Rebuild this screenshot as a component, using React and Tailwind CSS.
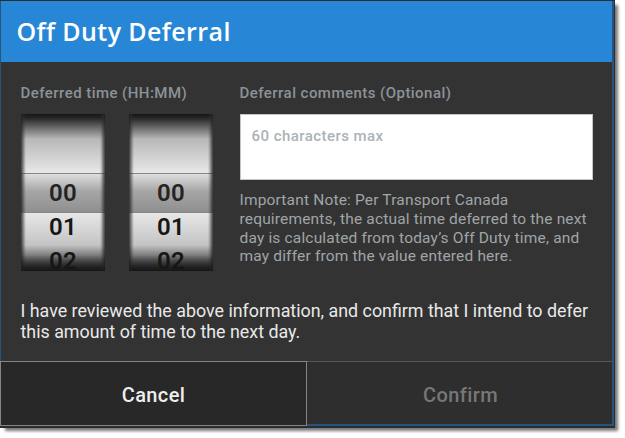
import React from 'react';

const WHEEL_VALUES = ['00', '01', '02'];

/**
 * WheelPicker Component
 * Metallic spinner with a shaded selection band
 */
function WheelPicker() {
    return (
        <div className="relative w-[84px] h-[157px] overflow-hidden bg-[linear-gradient(to_bottom,#161616_0px,#262626_4px,#6c6c6c_14px,#b8b8b8_25px,#e8e8e8_59px,#e8e8e8_98px,#c4c4c4_131px,#8c8c8c_139px,#161616_157px)]">
            <div className="absolute inset-x-0 top-[59px] h-[40px] border-y border-[#868686] bg-[linear-gradient(to_bottom,#dedede_0%,#a6a6a6_45%,#8f8f8f_100%)]" />
            <div className="relative pt-[62px] pl-px text-center text-[24px] leading-[34px] font-semibold tracking-[0.2px] text-[#161616]">
                {WHEEL_VALUES.map((value) => (
                    <div key={value} className="first:text-[#242424]">{value}</div>
                ))}
            </div>
            <div className="absolute inset-0 bg-[linear-gradient(to_right,#202020d0_0px,#30303090_2px,#30303050_3px,transparent_5px,transparent_79px,#30303050_81px,#30303090_82px,#202020d0_84px)]" />
            <div className="absolute inset-x-0 bottom-0 h-[16px] bg-linear-to-b from-transparent to-[#161616]/70" />
        </div>
    );
}

function DeferralForm() {
    return (
        <div className="h-[299px] pl-[19.5px] pr-[20px] pt-[21px]">
            <div className="flex h-[209px]">
                <div className="w-[219px] shrink-0">
                    <div className="text-[15px] leading-[20px] font-medium tracking-[0.45px] text-[#8b9298] whitespace-nowrap">Deferred time (HH:MM)</div>
                    <div className="flex gap-6 pt-[11px]">
                        <WheelPicker />
                        <WheelPicker />
                    </div>
                </div>
                <div className="w-[353px]">
                    <label htmlFor="comments" className="block text-[15px] leading-[20px] font-medium tracking-[0.46px] text-[#8b9298] whitespace-nowrap">Deferral comments (Optional)</label>
                    <textarea
                        id="comments"
                        maxLength={60}
                        placeholder="60 characters max"
                        className="mt-[11px] block h-[66px] w-[353px] resize-none border border-[#c4c4c4] bg-white px-[11px] py-[11px] text-[15px] leading-[20px] font-medium tracking-[0.45px] placeholder:text-[#aab3b8]"
                    />
                    <p className="pt-[11px] text-[15.5px] leading-[18.8px] tracking-[0.17px] text-[#a0a5a8] whitespace-nowrap">
                        Important Note: Per Transport Canada<br />
                        requirements, the actual time deferred to the next<br />
                        day is calculated from today’s Off Duty time, and<br />
                        may differ from the value entered here.
                    </p>
                </div>
            </div>
            <p className="pt-[8px] text-[17.85px] leading-[21px] text-[#e9e9e9] whitespace-nowrap">
                I have reviewed the above information, and confirm that I intend to defer<br />
                this amount of time to the next day.
            </p>
        </div>
    );
}

export default function App() {
    return (
        <div className="relative h-[438px] w-[625px] overflow-hidden bg-white font-['Roboto',sans-serif]">
            <div className="relative h-[428px] w-[615px] bg-[#292d30] pt-px shadow-[4px_4px_3px_-1px_#777777]">
                <div className="h-[425px] w-[614px] border-r-2 border-b-2 border-l border-[#28537a] bg-[#333333]">
                    <header className="flex h-[61px] items-center bg-[#2787d6] pb-[2px] pl-[15.5px]">
                        <h1 className="font-['Open_Sans',sans-serif] text-[25px] leading-[34px] font-semibold tracking-[0.4px] text-white">Off Duty Deferral</h1>
                    </header>
                    <DeferralForm />
                    <footer className="-ml-px flex h-[65px]">
                        <button type="button" className="h-[65px] w-[307px] border border-[#858585] bg-[#282828] pt-[2px] text-[20px] font-medium tracking-[0.4px] text-[#eeeeee]">Cancel</button>
                        <button type="button" disabled className="h-[63px] flex-1 border-t border-[#585858] bg-[#2e2e2e] pt-[3px] pl-[2px] text-[20px] font-medium tracking-[0.4px] text-[#777777]">Confirm</button>
                    </footer>
                </div>
            </div>
        </div>
    );
}
